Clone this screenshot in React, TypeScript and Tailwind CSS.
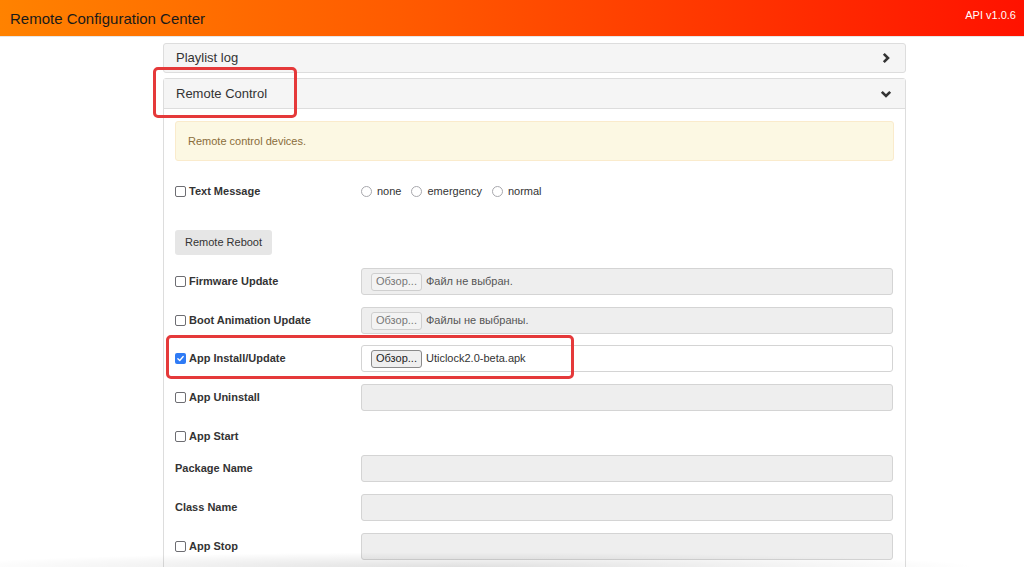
import React from 'react';

const font = { fontFamily: '"Liberation Sans", Arial, Helvetica, sans-serif' };

const Check = ({ checked = false }: { checked?: boolean }) =>
  checked ? (
    <span className="w-[11px] h-[11px] rounded-[2px] bg-[#2f7bf5] flex items-center justify-center mr-[3px] shrink-0">
      <svg viewBox="0 0 12 12" className="w-[9px] h-[9px]">
        <path d="M2.5 6.2 L5 8.6 L9.6 3.4" fill="none" stroke="#fff" strokeWidth="1.8" strokeLinecap="round" strokeLinejoin="round" />
      </svg>
    </span>
  ) : (
    <span className="w-[11px] h-[11px] rounded-[2px] border border-[#6d6d72] bg-white mr-[3px] shrink-0" />
  );

const Radio = ({ label }: { label: string }) => (
  <span className="flex items-center mr-[10px]">
    <span className="w-[11px] h-[11px] rounded-full border border-[#a8a8ad] bg-white mr-[5px]" />
    <span className="text-[11px] text-[#333]">{label}</span>
  </span>
);

const FileBox = ({ text, active = false }: { text: string; active?: boolean }) => (
  <div
    className={`w-[532px] h-[27px] rounded-[3px] border border-[#d4d4d4] flex items-center pl-[9px] ${
      active ? 'bg-white' : 'bg-[#eeeeee]'
    }`}
  >
    <span
      className={`h-[18px] px-[4px] rounded-[3px] border text-[11px] flex items-center mr-[4px] ${
        active ? 'border-[#8a8a8a] bg-[#efefef] text-[#222]' : 'border-[#cfcfcf] bg-[#f3f3f3] text-[#777]'
      }`}
    >
      Обзор...
    </span>
    <span className={`text-[11px] ${active ? 'text-[#333]' : 'text-[#555]'}`}>{text}</span>
  </div>
);

const EmptyBox = () => <div className="w-[532px] h-[27px] rounded-[3px] border border-[#d4d4d4] bg-[#eeeeee]" />;

const Row = ({
  label,
  check,
  checked,
  children,
  className = '',
}: {
  label: string;
  check?: boolean;
  checked?: boolean;
  children?: React.ReactNode;
  className?: string;
}) => (
  <div className={`flex items-center ${className}`}>
    <div className="w-[186px] flex items-center text-[11px] font-bold text-[#333]">
      {check && <Check checked={checked} />}
      {label}
    </div>
    {children}
  </div>
);

export default function App() {
  return (
    <div className="relative w-[1024px] h-[567px] overflow-hidden bg-white" style={font}>
      <div className="h-[37px] bg-[linear-gradient(to_right,#ff8200,#ff5a00_40%,#ff1200)] flex justify-between border-b border-[#e6e6e6]">
        <span className="text-[15px] leading-[18px] text-[#1a1a1a] pl-[10px] pt-[10px]">Remote Configuration Center</span>
        <span className="text-[11px] leading-[13px] text-white pr-[8px] pt-[9px]">API v1.0.6</span>
      </div>

      <div className="ml-[163px] w-[743px] mt-[6px]">
        <div className="h-[30px] bg-[#f5f5f5] border border-[#dddddd] rounded-[3px] flex items-center justify-between pl-[12px] pr-[13px]">
          <span className="text-[13px] text-[#333]">Playlist log</span>
          <svg viewBox="0 0 12 12" className="w-[12px] h-[12px]">
            <path d="M3.8 1.8 L8 6 L3.8 10.2" fill="none" stroke="#333" strokeWidth="2.6" />
          </svg>
        </div>

        <div className="mt-[5px] border border-[#dddddd] rounded-t-[3px] h-[500px]">
          <div className="h-[30px] bg-[#f5f5f5] border-b border-[#dddddd] flex items-center justify-between pl-[12px] pr-[13px]">
            <span className="text-[13px] text-[#333]">Remote Control</span>
            <svg viewBox="0 0 12 12" className="w-[12px] h-[12px]">
              <path d="M1.8 3.8 L6 8 L10.2 3.8" fill="none" stroke="#333" strokeWidth="2.6" />
            </svg>
          </div>

          <div className="px-[11px] pt-[12px]">
            <div className="h-[40px] bg-[#fcf8e3] border border-[#faebcc] rounded-[3px] flex items-center px-[12px] text-[11px] text-[#8a6d3b]">
              Remote control devices.
            </div>

            <Row label="Text Message" check className="mt-[17px] h-[26px]">
              <Radio label="none" />
              <Radio label="emergency" />
              <Radio label="normal" />
            </Row>

            <div className="mt-[26px] h-[25px] flex">
              <span className="h-[25px] px-[10px] bg-[#e6e6e6] rounded-[3px] text-[11px] text-[#333] flex items-center">
                Remote Reboot
              </span>
            </div>

            <Row label="Firmware Update" check className="mt-[13px] h-[27px]">
              <FileBox text="Файл не выбран." />
            </Row>
            <Row label="Boot Animation Update" check className="mt-[12px] h-[27px]">
              <FileBox text="Файлы не выбраны." />
            </Row>
            <Row label="App Install/Update" check checked className="mt-[11px] h-[27px]">
              <FileBox text="Uticlock2.0-beta.apk" active />
            </Row>
            <Row label="App Uninstall" check className="mt-[12px] h-[27px]">
              <EmptyBox />
            </Row>
            <Row label="App Start" check className="mt-[12px] h-[26px]" />
            <Row label="Package Name" className="mt-[6px] h-[27px]">
              <EmptyBox />
            </Row>
            <Row label="Class Name" className="mt-[12px] h-[27px]">
              <EmptyBox />
            </Row>
            <Row label="App Stop" check className="mt-[12px] h-[27px]">
              <EmptyBox />
            </Row>
          </div>
        </div>
      </div>

      {/* annotation boxes */}
      <div className="absolute left-[153px] top-[67px] w-[144px] h-[51px] border-[3px] border-[#e5393a] rounded-[5px] pointer-events-none" />
      <div className="absolute left-[166px] top-[335px] w-[408px] h-[44px] border-[3px] border-[#e5393a] rounded-[5px] pointer-events-none" />

      {/* bottom shadow */}
      <div className="absolute left-0 right-0 bottom-0 h-[16px] bg-[radial-gradient(ellipse_at_45%_100%,rgba(0,0,0,0.12),rgba(0,0,0,0)_65%)] pointer-events-none" />
    </div>
  );
}
